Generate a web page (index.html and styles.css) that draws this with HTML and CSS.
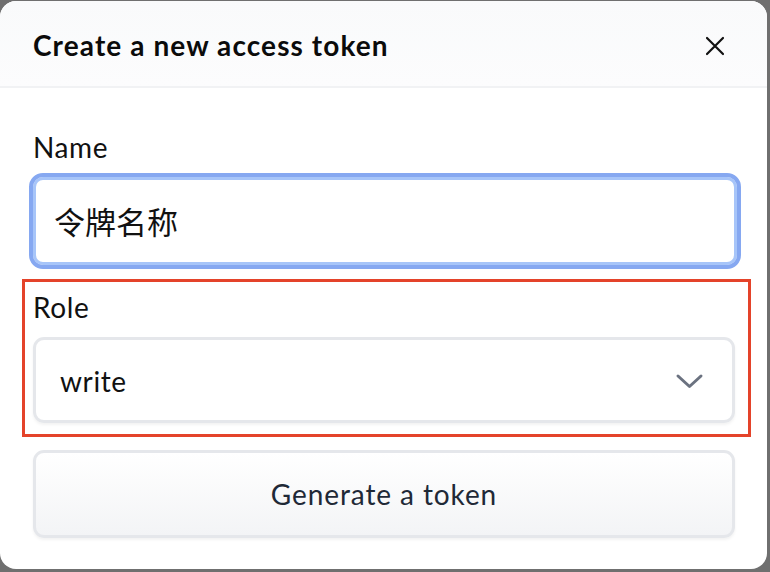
FILE: index.html
```html
<!DOCTYPE html>
<html>
<head>
<meta charset="utf-8">
<link rel="stylesheet" href="styles.css">
</head>
<body>
<div class="modal">
  <div class="header">
    <h2 class="title">Create a new access token</h2>
    <button class="close" aria-label="Close">
      <svg width="20" height="20" viewBox="0 0 20 20"><path d="M2 2 L18 18 M18 2 L2 18" stroke="#111" stroke-width="2.2" fill="none" stroke-linecap="round"/></svg>
    </button>
  </div>
  <div class="body">
    <label class="field">
      <span class="label">Name</span>
      <div class="input">令牌名称</div>
    </label>
    <div class="highlight">
      <span class="label">Role</span>
      <div class="select">
        <span>write</span>
        <svg width="29" height="17" viewBox="0 0 29 17"><path d="M3 3 L14.5 13.5 L26 3" stroke="#6b7280" stroke-width="3" fill="none" stroke-linecap="round" stroke-linejoin="round"/></svg>
      </div>
    </div>
    <button class="generate">Generate a token</button>
  </div>
</div>
</body>
</html>
```
FILE: styles.css
```css
html, body {
  margin: 0;
  padding: 0;
}
body {
  background: #6f6f6f;
  width: 770px;
  height: 572px;
  overflow: hidden;
  font-family: "Lato", "Noto Sans CJK SC", sans-serif;
  padding-top: 1px;
  box-sizing: border-box;
}
.modal {
  width: 767px;
  height: 568px;
  background: #fff;
  border-radius: 16px;
  overflow: hidden;
  display: flex;
  flex-direction: column;
}
.header {
  height: 87px;
  background: linear-gradient(to bottom, #f9fafb, #fcfcfd);
  border-bottom: 2px solid #f1f2f4;
  display: flex;
  align-items: center;
  justify-content: space-between;
  padding: 0 42px 0 33px;
  box-sizing: border-box;
  flex-shrink: 0;
}
.title {
  margin: 0;
  font-size: 28px;
  font-weight: 700;
  color: #0b0b0b;
  letter-spacing: 1.1px;
  padding-top: 2px;
}
.close {
  border: 0;
  background: none;
  padding: 0;
  width: 20px;
  height: 20px;
  display: flex;
  margin-top: 5px;
}
.body {
  padding: 42px 32px 0 33px;
  display: flex;
  flex-direction: column;
}
.field {
  display: flex;
  flex-direction: column;
}
.label {
  font-size: 28px;
  color: #111;
  line-height: 34px;
  letter-spacing: 0.6px;
}
.input {
  margin: 9px 0 0 -4px;
  height: 96px;
  box-sizing: border-box;
  border: 4px solid #86a8f1;
  box-shadow: inset 0 0 0 3px #a7c5f9;
  border-radius: 14px;
  padding-left: 21px;
  padding-bottom: 2px;
  display: flex;
  align-items: center;
  font-size: 31px;
  font-family: "Noto Sans CJK SC", sans-serif;
  color: #111;
  width: 712px;
}
.highlight {
  margin: 10px 0 0 -11px;
  width: 729px;
  height: 158px;
  box-sizing: border-box;
  border: 3px solid #e4432a;
  padding: 8px 13px 0 8px;
  display: flex;
  flex-direction: column;
}
.select {
  margin-top: 13px;
  height: 86px;
  box-sizing: border-box;
  border: 3px solid #e5e7eb;
  border-radius: 11px;
  box-shadow: 0 2px 3px rgba(0,0,0,0.05);
  display: flex;
  align-items: center;
  justify-content: space-between;
  padding: 0 28px 0 24px;
  font-size: 28px;
  color: #111;
  letter-spacing: 0.6px;
}
.select span {
  padding-top: 2px;
}
.select svg {
  margin-top: 2px;
}
.generate {
  margin-top: 13px;
  height: 88px;
  box-sizing: border-box;
  border: 3px solid #e5e7eb;
  border-radius: 11px;
  background: linear-gradient(to bottom, #ffffff, #f3f4f6);
  box-shadow: 0 2px 3px rgba(0,0,0,0.05);
  font-family: "Lato", sans-serif;
  font-size: 28px;
  letter-spacing: 0.9px;
  color: #1f2937;
  width: 702px;
  padding: 0 0 1px;
}
```
